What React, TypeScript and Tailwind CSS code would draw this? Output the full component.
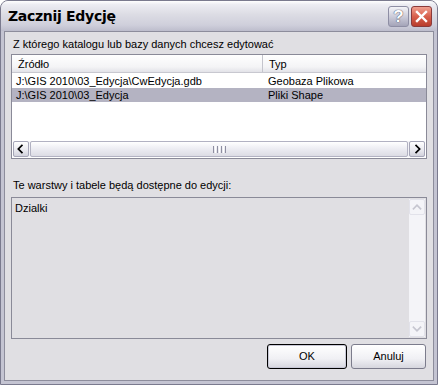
import React from 'react';

const font = "font-['Liberation_Sans',Arial,sans-serif]";

const ArrowBtn = ({ dir, disabled }: { dir: 'left' | 'right' | 'up' | 'down'; disabled?: boolean }) => {
  const paths: Record<string, string> = {
    left: 'M9 4 L5 8 L9 12',
    right: 'M7 4 L11 8 L7 12',
    up: 'M4 10 L8 6 L12 10',
    down: 'M4 6 L8 10 L12 6',
  };
  return (
    <div
      className={`w-[16px] h-[16px] shrink-0 rounded-[2px] border flex items-center justify-center ${
        disabled
          ? 'border-[#e2e2ea] bg-[#f4f4f8]'
          : 'border-[#a6a6b8] bg-[linear-gradient(to_bottom,#ffffff,#e8e8ee_60%,#d2d2dc)]'
      }`}
    >
      <svg width="16" height="16" viewBox="0 0 16 16">
        <path
          d={paths[dir]}
          fill="none"
          stroke={disabled ? '#c6c6d0' : '#000000'}
          strokeWidth="2"
          strokeLinecap="square"
        />
      </svg>
    </div>
  );
};

const TitleButton = ({ kind }: { kind: 'help' | 'close' }) =>
  kind === 'help' ? (
    <div className="w-[21px] h-[21px] rounded-[3px] border border-[#8e8ea4] bg-[linear-gradient(to_bottom,#f4f4f8,#c8c8d6_55%,#a4a4b8)] flex items-center justify-center">
      <span className="text-[#ffffff] font-bold text-[17px] leading-none [text-shadow:0_0_1px_#4a4a60,0_0_1px_#4a4a60] font-['Liberation_Sans',Arial,sans-serif]">?</span>
    </div>
  ) : (
    <div className="w-[21px] h-[21px] rounded-[3px] border border-[#8a3a3a] bg-[linear-gradient(to_bottom,#f0a090,#d8604c_50%,#b83c2c)] flex items-center justify-center">
      <svg width="13" height="13" viewBox="0 0 13 13">
        <path d="M2 2 L11 11 M11 2 L2 11" stroke="#ffffff" strokeWidth="2.4" strokeLinecap="square" />
      </svg>
    </div>
  );

export default function App() {
  return (
    <div className={`w-[438px] h-[385px] flex flex-col ${font} text-[11px] text-black`}>
      <div className="flex-1 flex flex-col rounded-t-[8px] border border-[#7a7a8e] bg-[#c4c4d2] overflow-hidden">
        {/* Title bar */}
        <div className="h-[30px] shrink-0 flex items-center justify-between pl-[7px] pr-[5px] bg-[linear-gradient(to_bottom,#ffffff_0%,#ececf2_12%,#dcdce4_45%,#cfcfdb_80%,#bdbdcc_100%)]">
          <span className="font-bold text-[14px] text-black font-['DejaVu_Sans',sans-serif] tracking-[-0.3px]">Zacznij Edycję</span>
          <div className="flex gap-[2px] pt-[1px]">
            <TitleButton kind="help" />
            <TitleButton kind="close" />
          </div>
        </div>

        {/* Body */}
        <div className="flex-1 flex flex-col mx-[3px] mb-[3px] border border-[#8d8d9c] bg-[#e0dfe3] px-[6px] pt-[5px]">
          <div className="h-[14px] leading-[14px] pl-[2px]">Z którego katalogu lub bazy danych chcesz edytować</div>

          {/* List view */}
          <div className="mt-[3px] h-[105px] flex flex-col border border-[#8a8a98] bg-white">
            <div className="flex h-[18px] shrink-0 border-b border-[#c8c8d0] bg-[linear-gradient(to_bottom,#ffffff,#f4f4f6_70%,#e2e2e8)]">
              <div className="w-[251px] pl-[6px] leading-[18px] border-r border-[#c4c4cc]">Źródło</div>
              <div className="flex-1 pl-[6px] leading-[18px]">Typ</div>
            </div>
            <div className="flex-1 pt-[1px]">
              <div className="flex h-[14px] leading-[14px]">
                <div className="w-[251px] pl-[4px]">J:\GIS 2010\03_Edycja\CwEdycja.gdb</div>
                <div className="flex-1 pl-[5px]">Geobaza Plikowa</div>
              </div>
              <div className="flex h-[14px] leading-[14px] bg-[#b4b3c2]">
                <div className="w-[251px] pl-[4px]">J:\GIS 2010\03_Edycja</div>
                <div className="flex-1 pl-[5px]">Pliki Shape</div>
              </div>
            </div>
            <div className="h-[16px] shrink-0 flex bg-[#f2f2f6] mb-[1px] mx-[1px]">
              <ArrowBtn dir="left" />
              <div className="flex-1 mx-[1px] rounded-[2px] border border-[#b2b2c2] bg-[linear-gradient(to_bottom,#ffffff,#ececf2_50%,#dcdce4)] flex items-center justify-center">
                <div className="flex gap-[1px]">
                  <div className="w-[1px] h-[7px] bg-[#8e8ea0]" />
                  <div className="w-[1px] h-[7px] bg-[#ffffff]" />
                  <div className="w-[1px] h-[7px] bg-[#8e8ea0]" />
                  <div className="w-[1px] h-[7px] bg-[#ffffff]" />
                  <div className="w-[1px] h-[7px] bg-[#8e8ea0]" />
                  <div className="w-[1px] h-[7px] bg-[#ffffff]" />
                  <div className="w-[1px] h-[7px] bg-[#8e8ea0]" />
                </div>
              </div>
              <ArrowBtn dir="right" />
            </div>
          </div>

          <div className="mt-[19px] h-[14px] leading-[14px] pl-[2px]">Te warstwy i tabele będą dostępne do edycji:</div>

          {/* Text area */}
          <div className="mt-[5px] h-[142px] flex border border-[#8a8a98] bg-[#e0dfe3]">
            <div className="flex-1 pl-[3px] pt-[3px] leading-[14px]">Dzialki</div>
            <div className="w-[16px] flex flex-col bg-[#f4f4f8] my-[1px] mr-[1px]">
              <ArrowBtn dir="up" disabled />
              <div className="flex-1" />
              <ArrowBtn dir="down" disabled />
            </div>
          </div>

          {/* Buttons */}
          <div className="flex justify-end gap-[4px] mt-[5px] pr-[1px]">
            <button className="w-[80px] h-[25px] rounded-[3px] border border-[#000000] bg-[linear-gradient(to_bottom,#ffffff,#f0f0f4_60%,#d6d6de)] shadow-[inset_0_0_0_1px_#c8c8d6] text-[11px]">
              OK
            </button>
            <button className="w-[75px] h-[25px] rounded-[3px] border border-[#7c7c8c] bg-[linear-gradient(to_bottom,#ffffff,#f0f0f4_60%,#d6d6de)] text-[11px]">
              Anuluj
            </button>
          </div>
        </div>
      </div>
    </div>
  );
}
